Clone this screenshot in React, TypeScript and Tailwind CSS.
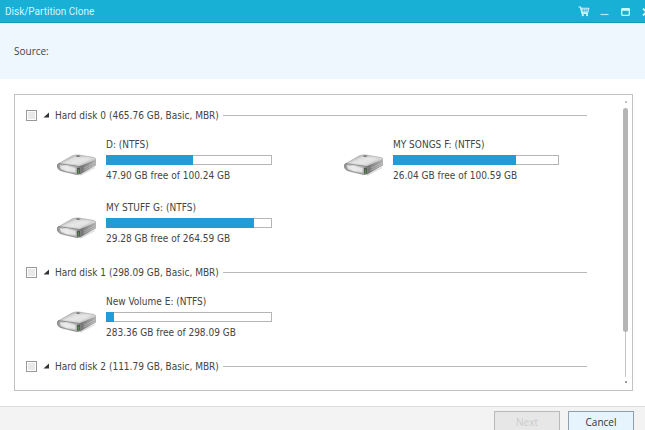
import { useState } from 'react';

interface Volume {
  name: string;
  usage: string;
  used: number;
}

interface Disk {
  id: string;
  label: string;
  volumes: Volume[];
}

const disks: Disk[] = [
  {
    id: 'disk0',
    label: 'Hard disk 0 (465.76 GB, Basic, MBR)',
    volumes: [
      { name: 'D: (NTFS)', usage: '47.90 GB free of 100.24 GB', used: 53 },
      { name: 'MY SONGS F: (NTFS)', usage: '26.04 GB free of 100.59 GB', used: 75 },
      { name: 'MY STUFF G: (NTFS)', usage: '29.28 GB free of 264.59 GB', used: 90 },
    ],
  },
  {
    id: 'disk1',
    label: 'Hard disk 1 (298.09 GB, Basic, MBR)',
    volumes: [{ name: 'New Volume E: (NTFS)', usage: '283.36 GB free of 298.09 GB', used: 5 }],
  },
  { id: 'disk2', label: 'Hard disk 2 (111.79 GB, Basic, MBR)', volumes: [] },
];

function DriveIcon() {
  return (
    <svg viewBox="0 0 40 22" className="mt-2 h-[22px] w-10 shrink-0" aria-hidden="true">
      <defs>
        <linearGradient id="driveTop" x1="0" y1="0" x2="1" y2="1">
          <stop offset="0" stopColor="#a8a8a8" />
          <stop offset="0.5" stopColor="#dedede" />
          <stop offset="1" stopColor="#b4b4b4" />
        </linearGradient>
        <linearGradient id="driveFront" x1="0" y1="0" x2="1" y2="0">
          <stop offset="0" stopColor="#8c8c8c" />
          <stop offset="0.4" stopColor="#e8e8e8" />
          <stop offset="1" stopColor="#9a9a9a" />
        </linearGradient>
        <linearGradient id="driveSide" x1="0" y1="0" x2="1" y2="0">
          <stop offset="0" stopColor="#6c6c6c" />
          <stop offset="1" stopColor="#b4b4b4" />
        </linearGradient>
      </defs>
      <path d="M3 16 L22 21 L38 13 L38 14 L24 21.5 L5 18 Z" fill="#d8d8d8" />
      <path d="M1 10 L15 2 Q18 0.5 22 1 L37 3.5 Q39.5 4.5 38.5 6 L22 13 Z" fill="url(#driveTop)" stroke="#a0a0a0" strokeWidth="0.6" />
      <path d="M7 8.5 L18 2.8 L34 5 L22 11 Z" fill="#f6f6f6" opacity="0.4" />
      <path d="M18.5 2 L21 1.3 L24 2 L21 3 Z" fill="#6b6b6b" />
      <path d="M22 12.5 L39 5.5 L39 11.5 L23 20.5 Z" fill="url(#driveSide)" />
      <path d="M27 14 L38 8.8 M27 16 L37.5 11" stroke="#cccccc" strokeWidth="0.5" />
      <path d="M1.5 9.5 Q0 10 0.5 13 Q1 15.5 3 16.2 L19 20.3 Q23.5 21 23.5 18 L23.5 13.5 Q23 12.5 21 12.3 Z" fill="url(#driveFront)" stroke="#7f7f7f" strokeWidth="0.8" />
      <path d="M3 11.2 L18.5 14 L18.5 18.2 L5 15.2 Q3 14.4 3 11.2 Z" fill="#ececec" opacity="0.85" />
      <path d="M20 13.8 L23 13.5 L23 19.5 L20 19.8 Z" fill="#50584d" />
      <path d="M21.5 15.5 V19" stroke="#4aa03f" strokeWidth="1.2" />
    </svg>
  );
}

function VolumeItem({ volume }: { volume: Volume }) {
  return (
    <div className="flex items-center gap-[9px]">
      <DriveIcon />
      <div className="w-[166px]">
        <div className="leading-[14px] whitespace-nowrap">{volume.name}</div>
        <div className="mt-[3px] mb-1 h-2.5 border border-[#b5b5b5] bg-white">
          <div className="-mt-px -ml-px h-2.5 bg-[#259bd5]" style={{ width: `${volume.used}%` }} />
        </div>
        <div className="leading-[14px] whitespace-nowrap">{volume.usage}</div>
      </div>
    </div>
  );
}

function DiskGroup({ disk }: { disk: Disk }) {
  const [checked, setChecked] = useState(false);
  const [open, setOpen] = useState(true);

  return (
    <section>
      <div className="flex h-3.5 items-center">
        <input
          id={disk.id}
          type="checkbox"
          checked={checked}
          onChange={(e) => setChecked(e.target.checked)}
          className="size-[11px] shrink-0 appearance-none border border-[#999] bg-[#e9e9e9] shadow-[inset_0_0_0_1px_#fff] checked:bg-[#259bd5]"
        />
        <button
          type="button"
          aria-label="Toggle volumes"
          onClick={() => setOpen(!open)}
          className="mr-[5px] ml-1.5 flex shrink-0"
        >
          <svg viewBox="0 0 7 6" className="h-1.5 w-[7px]" aria-hidden="true">
            <path d="M6 0.5 V5.5 H0.5 Z" fill="#333" />
          </svg>
        </button>
        <label htmlFor={disk.id} className="pt-0.5 leading-[14px] whitespace-nowrap">
          {disk.label}
        </label>
        <div className="ml-1 h-px flex-1 bg-[#b9b9b9]" />
      </div>
      {open && disk.volumes.length > 0 && (
        <div className="mt-4 ml-[31px] grid grid-cols-[287fr_243fr] gap-y-[18px]">
          {disk.volumes.map((volume) => (
            <VolumeItem key={volume.name} volume={volume} />
          ))}
        </div>
      )}
    </section>
  );
}

function TitleBar() {
  return (
    <header className="flex h-[23px] shrink-0 items-center justify-between border-b border-[#1498b8] bg-[#18b0d5] pl-[5px] text-[#d5f6ff]">
      <h1 className="pt-0.5 font-['Roboto','Open_Sans',sans-serif] text-[10px] leading-4">Disk/Partition Clone</h1>
      <div className="-mr-1.5 flex items-center gap-2.5 pt-px">
        <button type="button" aria-label="Buy" className="flex">
          <svg viewBox="0 0 12 11" className="h-[11px] w-3" aria-hidden="true">
            <path d="M0.5 1 H2.5 L4 7.5 H10" fill="none" stroke="#d5f6ff" strokeWidth="1.2" />
            <path d="M3 2.2 H11 L10 6.5 H4 Z" fill="#a9e7f5" stroke="#d5f6ff" strokeWidth="0.8" />
            <path d="M5.5 2.5 V6.3 M7.3 2.5 V6.3 M9.1 2.5 V6.3 M3.8 4.3 H10.6" stroke="#35b4d2" strokeWidth="0.5" />
            <circle cx="4.8" cy="9.2" r="1.1" fill="#d5f6ff" />
            <circle cx="9" cy="9.2" r="1.1" fill="#d5f6ff" />
          </svg>
        </button>
        <button type="button" aria-label="Minimize" className="flex">
          <svg viewBox="0 0 9 8" className="h-2 w-[9px]" aria-hidden="true">
            <path d="M0.5 6.5 H8.5" stroke="#b0eafa" strokeWidth="1.2" />
          </svg>
        </button>
        <button type="button" aria-label="Maximize" className="ml-0.5 flex">
          <svg viewBox="0 0 9 8" className="h-2 w-[9px]" aria-hidden="true">
            <rect x="0.7" y="0.7" width="7.6" height="6.6" rx="0.8" fill="none" stroke="#d5f6ff" strokeWidth="1.3" />
            <path d="M0.5 1.6 H8.5" stroke="#d5f6ff" strokeWidth="2.4" />
          </svg>
        </button>
        <button type="button" aria-label="Close" className="ml-0.5 flex">
          <svg viewBox="0 0 9 8" className="h-2 w-[9px]" aria-hidden="true">
            <path d="M1 0.5 L8 7.5 M8 0.5 L1 7.5" stroke="#e6fbff" strokeWidth="1.8" />
          </svg>
        </button>
      </div>
    </header>
  );
}

export default function App() {
  return (
    <div className="flex h-screen flex-col overflow-hidden bg-white font-['DejaVu_Sans_Condensed','DejaVu_Sans',sans-serif] text-[10px] text-[#444]">
      <TitleBar />
      <div className="flex h-14 shrink-0 items-center bg-[#eef6fe] pl-3.5 font-['Open_Sans','Noto_Sans',sans-serif]">
        Source:
      </div>
      <main className="flex min-h-0 flex-1 flex-col pt-[15px] pr-3 pb-[15px] pl-3.5">
        <div className="flex min-h-0 flex-1 border border-[#c2c2c2] pr-[3px] pl-[11px]">
          <div className="flex min-w-0 flex-1 flex-col gap-[19px] overflow-hidden pt-[13px] pr-[35px]">
            {disks.map((disk) => (
              <DiskGroup key={disk.id} disk={disk} />
            ))}
          </div>
          <div className="flex w-[7px] shrink-0 flex-col items-center pt-1.5 pb-[7px]" aria-hidden="true">
            <div className="size-0.5 rounded-full bg-[#aaa]" />
            <div className="mt-[5px] w-[5px] flex-[5] rounded-full bg-[#b5b5b5]" />
            <div className="w-px flex-1 bg-[#c6c6c6]" />
            <div className="mt-1 size-0.5 rounded-full bg-[#777]" />
          </div>
        </div>
      </main>
      <footer className="flex h-6 shrink-0 items-start justify-end gap-2 border-t border-[#dedede] bg-[#f3f3f4] pt-1 pr-[11px] font-['Open_Sans','Noto_Sans',sans-serif]">
        <button
          type="button"
          disabled
          className="h-[22px] w-[66px] shrink-0 border border-[#b9b9b9] bg-[#e7e7e7] text-[#cbcbcb]"
        >
          Next
        </button>
        <button
          type="button"
          className="h-[22px] w-[66px] shrink-0 border border-[#8e9eac] bg-[#e6f4fe] text-[#333]"
        >
          Cancel
        </button>
      </footer>
    </div>
  );
}
